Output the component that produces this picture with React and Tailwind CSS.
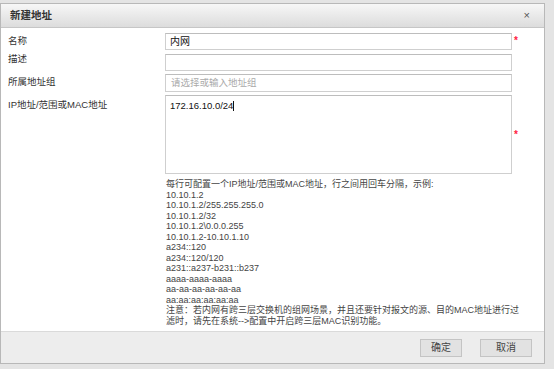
export default function App() {
  const font = { fontFamily: '"Liberation Sans", "Noto Sans CJK SC", sans-serif' };
  const helpLines = [
    "10.10.1.2",
    "10.10.1.2/255.255.255.0",
    "10.10.1.2/32",
    "10.10.1.2\\0.0.0.255",
    "10.10.1.2-10.10.1.10",
    "a234::120",
    "a234::120/120",
    "a231::a237-b231::b237",
    "aaaa-aaaa-aaaa",
    "aa-aa-aa-aa-aa-aa",
    "aa:aa:aa:aa:aa:aa",
  ];
  return (
    <div className="w-[554px] h-[369px] bg-[#e4e4e4] overflow-hidden pt-[3px] text-[#333]" style={font}>
      <div className="w-[545px] h-[361px] bg-white border border-[#b8b8b8] flex flex-col">
        <div className="h-[24px] shrink-0 flex items-center justify-between pl-[9px] pr-[14px] bg-gradient-to-b from-[#f7f7f7] to-[#dcdcdc] border-b border-[#c6c6c6]">
          <span className="text-[10.5px] font-bold text-[#333]">新建地址</span>
          <span className="text-[11px] text-[#555] leading-none">×</span>
        </div>
        <div className="flex-1 flex flex-col pl-[7px] pt-[5px] text-[9.5px]">
          <div className="flex items-start h-[17px]">
            <div className="w-[157px] pt-[1px]">名称</div>
            <div className="w-[347px] h-[17px] border border-[#cfcfcf] border-t-[#bdbdbd] flex items-center pl-[4px] text-[10px] text-[#111]">内网</div>
            <span className="ml-[2px] mt-[3px] text-[#ff2040] text-[10px] font-bold leading-none">*</span>
          </div>
          <div className="flex items-start h-[17px] mt-[4px]">
            <div className="w-[157px] -mt-[2px]">描述</div>
            <div className="w-[347px] h-[17px] border border-[#cfcfcf] border-t-[#bdbdbd]"></div>
          </div>
          <div className="flex items-start h-[18px] mt-[3px]">
            <div className="w-[157px] pt-[1px]">所属地址组</div>
            <div className="w-[347px] h-[18px] border border-[#cfcfcf] border-t-[#bdbdbd] flex items-center pl-[5px] text-[#aaa]">请选择或输入地址组</div>
          </div>
          <div className="flex items-start mt-[3px]">
            <div className="w-[157px] pt-[3px]">IP地址/范围或MAC地址</div>
            <div className="w-[347px] h-[79px] border border-[#cfcfcf] border-t-[#bdbdbd] pl-[4px] pt-[4px] text-[9.5px] text-[#111] leading-[12px]">
              172.16.10.0/24<span className="inline-block w-px h-[10px] bg-[#111] align-middle"></span>
            </div>
            <span className="ml-[2px] mt-[35px] text-[#ff2040] text-[10px] font-bold leading-none">*</span>
          </div>
          <div className="ml-[158px] mt-[5px] w-[360px] text-[9px] leading-[10.5px] text-[#444]">
            <div>每行可配置一个IP地址/范围或MAC地址，行之间用回车分隔，示例:</div>
            {helpLines.map((l) => (
              <div key={l}>{l}</div>
            ))}
            <div>注意：若内网有跨三层交换机的组网场景，并且还要针对报文的源、目的MAC地址进行过滤时，请先在系统--&gt;配置中开启跨三层MAC识别功能。</div>
          </div>
        </div>
        <div className="h-[32px] shrink-0 bg-[#ededed] border-t border-[#dadada] flex items-center justify-end gap-[18px] pr-[12px]">
          <button className="w-[42px] h-[18px] bg-[#e2e2e2] border border-[#c4c4c4] text-[10px] text-[#444]">确定</button>
          <button className="w-[52px] h-[18px] bg-[#e2e2e2] border border-[#c4c4c4] text-[10px] text-[#444]">取消</button>
        </div>
      </div>
    </div>
  );
}
